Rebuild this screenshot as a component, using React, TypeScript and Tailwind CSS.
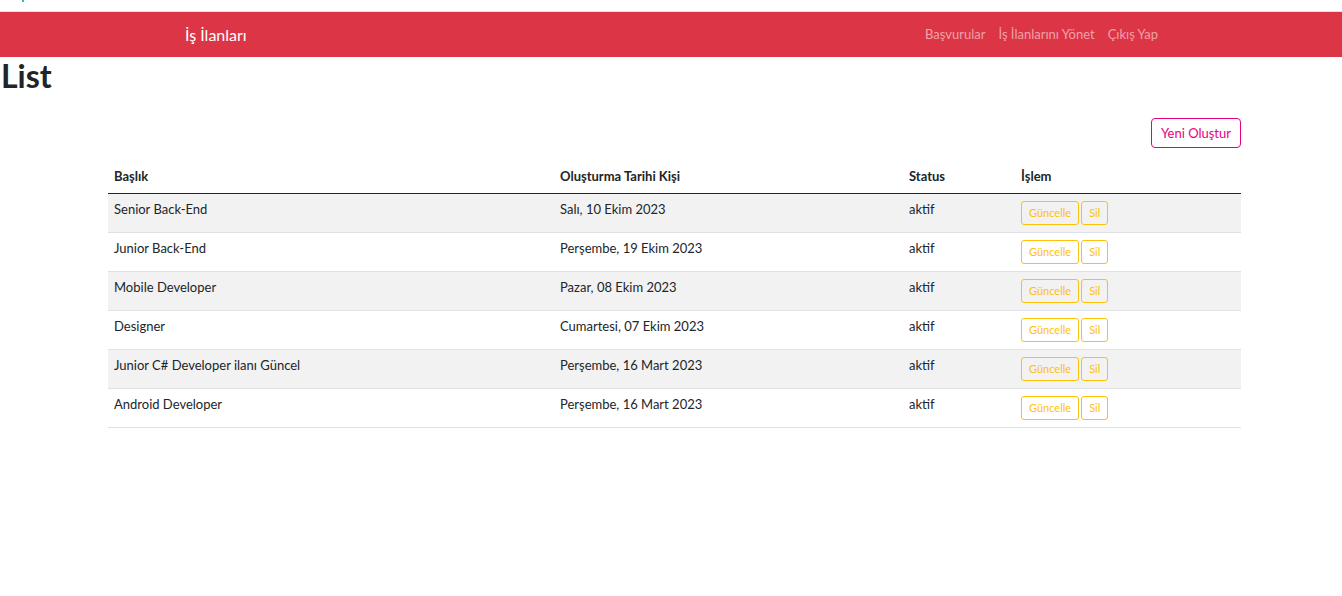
const rows = [
  { title: 'Senior Back-End', date: 'Salı, 10 Ekim 2023' },
  { title: 'Junior Back-End', date: 'Perşembe, 19 Ekim 2023' },
  { title: 'Mobile Developer', date: 'Pazar, 08 Ekim 2023' },
  { title: 'Designer', date: 'Cumartesi, 07 Ekim 2023' },
  { title: 'Junior C# Developer ilanı Güncel', date: 'Perşembe, 16 Mart 2023' },
  { title: 'Android Developer', date: 'Perşembe, 16 Mart 2023' },
];

export default function App() {
  return (
    <div className="min-h-[596px] bg-white font-['Lato','Liberation_Sans',sans-serif] text-[#212529]">
      <div className="h-[11px] relative">
        <span className="absolute left-[22px] top-0 w-[2px] h-[2px] bg-[#20c997]" />
      </div>
      <nav className="h-[46px] border-t border-[#dee2e6] bg-[#dc3545]">
        <div className="flex items-center justify-between h-full pl-[185px] pr-[184px]">
          <a className="text-white text-[16px]">İş İlanları</a>
          <div className="flex gap-[13px] text-[13px] text-[#f0a1a9]">
            <a>Başvurular</a>
            <a>İş İlanlarını Yönet</a>
            <a>Çıkış Yap</a>
          </div>
        </div>
      </nav>
      <h1 className="text-[32px] font-bold leading-[1.2] pl-[1px]">List</h1>
      <div className="ml-[108px] w-[1133px]">
        <div className="flex justify-end mt-[23px]">
          <button className="h-[30px] px-[9px] border border-[#e6007e] rounded-[4px] text-[#e6007e] text-[13px]">
            Yeni Oluştur
          </button>
        </div>
        <table className="w-full mt-[15px] text-[13px] border-collapse">
          <thead>
            <tr className="h-[30px] border-b border-[#212529]">
              <th className="w-[446px] text-left font-bold px-[6px] align-top pt-[4px]">Başlık</th>
              <th className="w-[349px] text-left font-bold px-[6px] align-top pt-[4px]">Oluşturma Tarihi Kişi</th>
              <th className="w-[112px] text-left font-bold px-[6px] align-top pt-[4px]">Status</th>
              <th className="text-left font-bold px-[6px] align-top pt-[4px]">İşlem</th>
            </tr>
          </thead>
          <tbody>
            {rows.map((r, i) => (
              <tr key={i} className={`h-[39px] border-b border-[#dee2e6] ${i % 2 === 0 ? 'bg-[#f2f2f2]' : 'bg-white'}`}>
                <td className="px-[6px] align-top pt-[6px]">{r.title}</td>
                <td className="px-[6px] align-top pt-[6px]">{r.date}</td>
                <td className="px-[6px] align-top pt-[6px]">aktif</td>
                <td className="px-[6px] align-top pt-[7px]">
                  <div className="flex gap-[2px]">
                    <button className="h-[24px] px-[7px] border border-[#ffc107] rounded-[3px] text-[#ffc107] text-[11px]">
                      Güncelle
                    </button>
                    <button className="h-[24px] px-[7px] border border-[#ffc107] rounded-[3px] text-[#ffc107] text-[11px]">
                      Sil
                    </button>
                  </div>
                </td>
              </tr>
            ))}
          </tbody>
        </table>
      </div>
    </div>
  );
}
